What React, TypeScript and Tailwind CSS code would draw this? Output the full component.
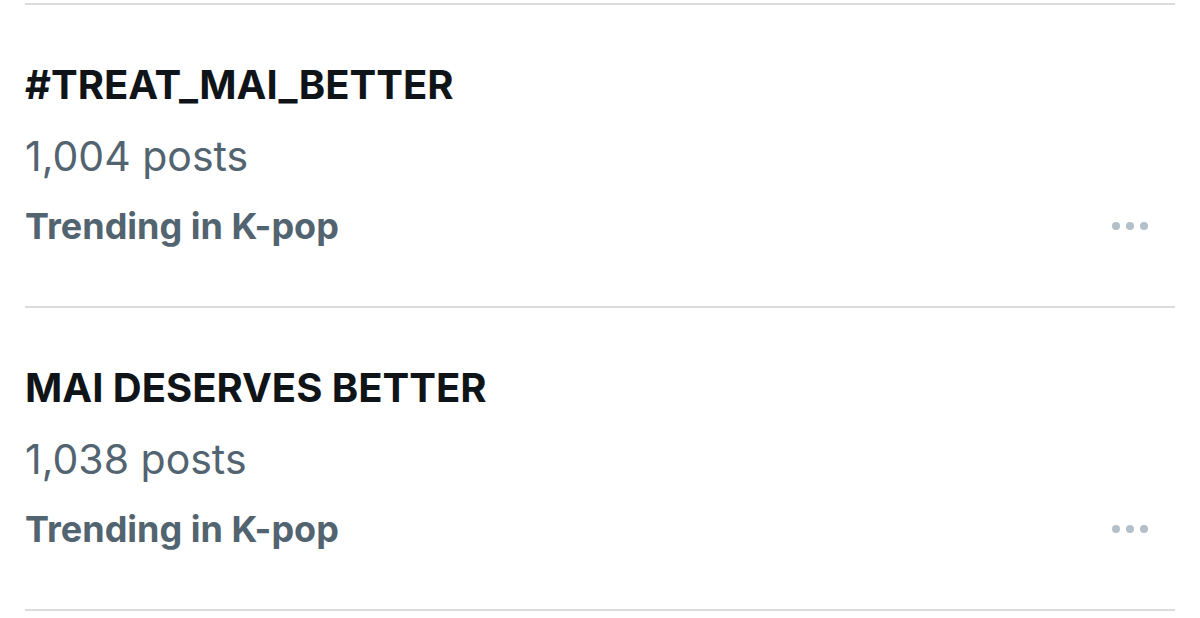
const trends = [
  { title: '#TREAT_MAI_BETTER', posts: '1,004 posts', category: 'Trending in K-pop' },
  { title: 'MAI DESERVES BETTER', posts: '1,038 posts', category: 'Trending in K-pop' },
];

function MoreDots() {
  return (
    <div className="flex items-center gap-[6px] mr-[27px]">
      <span className="w-[8px] h-[8px] rounded-full bg-[#b3bfc9]" />
      <span className="w-[8px] h-[8px] rounded-full bg-[#b3bfc9]" />
      <span className="w-[8px] h-[8px] rounded-full bg-[#b3bfc9]" />
    </div>
  );
}

export default function App() {
  return (
    <div className="w-[1200px] h-[618px] bg-white overflow-hidden px-[25px] pt-[3px] font-['Inter',sans-serif]">
      {trends.map((t) => (
        <div key={t.title} className="border-t-2 border-[#dcdcdc] h-[303px] pt-[56px]">
          <div className="text-[40px] leading-[48px] font-bold text-[#0f1419]">{t.title}</div>
          <div className="mt-[22px] text-[41px] leading-[50px] text-[#536471]">{t.posts}</div>
          <div className="mt-[22px] flex items-center justify-between">
            <span className="text-[36px] leading-[46px] font-bold text-[#536471]">{t.category}</span>
            <MoreDots />
          </div>
        </div>
      ))}
      <div className="border-t-2 border-[#dcdcdc]" />
    </div>
  );
}
